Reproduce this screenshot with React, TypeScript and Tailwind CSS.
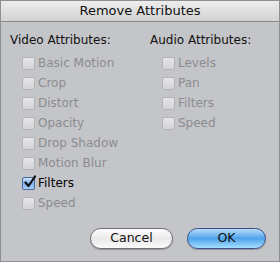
import React from "react"

const video = [
  { label: "Basic Motion", on: false, enabled: false },
  { label: "Crop", on: false, enabled: false },
  { label: "Distort", on: false, enabled: false },
  { label: "Opacity", on: false, enabled: false },
  { label: "Drop Shadow", on: false, enabled: false },
  { label: "Motion Blur", on: false, enabled: false },
  { label: "Filters", on: true, enabled: true },
  { label: "Speed", on: false, enabled: false },
]

const audio = ["Levels", "Pan", "Filters", "Speed"]

function Box({ on }: { on: boolean }) {
  if (on) {
    return (
      <span className="relative w-[13px] h-[13px] rounded-[2px] border border-[#4a6aa0] bg-gradient-to-b from-[#cfe3fb] via-[#7fb2ee] to-[#a9d0fa] shrink-0">
        <svg viewBox="0 0 14 14" className="absolute left-[0px] top-[-3px] w-[14px] h-[14px]">
          <path d="M2.5 7.5 L5.5 11 L12 1.5" fill="none" stroke="#111" strokeWidth="2.2" strokeLinecap="round" strokeLinejoin="round" />
        </svg>
      </span>
    )
  }
  return (
    <span className="w-[13px] h-[13px] rounded-[2px] border border-[#b3b4b7] bg-gradient-to-b from-[#e6e6e8] to-[#d3d4d6] shrink-0" />
  )
}

function Row({ label, on, enabled }: { label: string; on: boolean; enabled: boolean }) {
  return (
    <div className="h-[20px] flex items-center gap-[3px]">
      <Box on={on} />
      <span className={enabled ? "text-[#000]" : "text-[#8b8c90]"}>{label}</span>
    </div>
  )
}

export default function App() {
  return (
    <div
      className="w-[280px] h-[262px] bg-[#c4c5c8] border border-[#8e8f92] flex flex-col text-[12px]"
      style={{ fontFamily: '"DejaVu Sans", sans-serif' }}
    >
      <div className="h-[21px] border-b border-[#8a8b8e] bg-gradient-to-b from-[#ededed] to-[#d2d2d2] flex items-center justify-center text-[13px] text-[#111]">
        Remove Attributes
      </div>
      <div className="flex pt-[8px]">
        <div className="w-[140px] pl-[9px]">
          <div className="h-[20px] flex items-center text-[12px] text-[#111]">Video Attributes:</div>
          <div className="pl-[12px] pt-[3px]">
            {video.map((v) => (
              <Row key={v.label} {...v} />
            ))}
          </div>
        </div>
        <div className="pl-[9px]">
          <div className="h-[20px] flex items-center text-[12px] text-[#111]">Audio Attributes:</div>
          <div className="pl-[12px] pt-[3px]">
            {audio.map((a) => (
              <Row key={a} label={a} on={false} enabled={false} />
            ))}
          </div>
        </div>
      </div>
      <div className="flex justify-end gap-[14px] pr-[13px] mt-[15px]">
        <button className="w-[83px] h-[21px] rounded-full border border-[#6f6f72] bg-gradient-to-b from-[#fdfdfd] via-[#e9e9e9] to-[#fafafa] text-[12.5px] text-[#111] shadow-[0_1px_1px_rgba(0,0,0,0.25)]">
          Cancel
        </button>
        <button className="w-[79px] h-[21px] rounded-full border border-[#3b4f8c] bg-gradient-to-b from-[#b7dcfb] via-[#4ea3ea] to-[#a5e0fd] text-[12.5px] text-[#111] shadow-[0_1px_1px_rgba(0,0,0,0.25)]">
          OK
        </button>
      </div>
    </div>
  )
}
